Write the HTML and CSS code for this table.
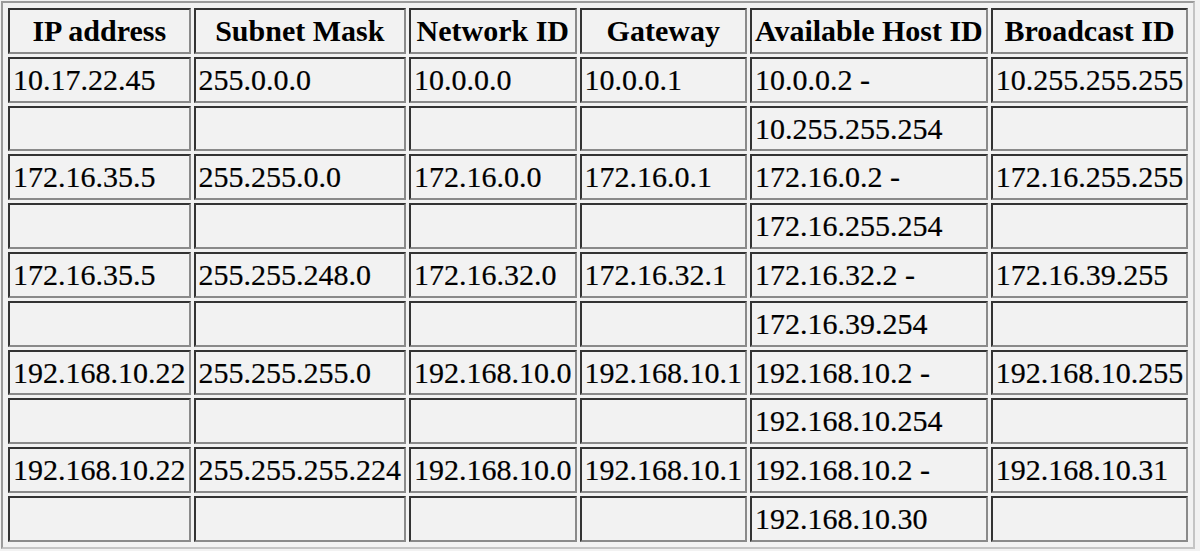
FILE: index.html
```html
<!DOCTYPE html>
<html>
<head>
<meta charset="utf-8">
<title>Subnetting table</title>
<link rel="stylesheet" href="styles.css">
</head>
<body>
<table class="net-table">
  <thead>
    <tr>
      <th>IP address</th>
      <th>Subnet Mask</th>
      <th>Network ID</th>
      <th>Gateway</th>
      <th>Available Host ID</th>
      <th>Broadcast ID</th>
    </tr>
  </thead>
  <tbody>
    <tr><td>10.17.22.45</td><td>255.0.0.0</td><td>10.0.0.0</td><td>10.0.0.1</td><td>10.0.0.2 -</td><td>10.255.255.255</td></tr>
    <tr><td></td><td></td><td></td><td></td><td>10.255.255.254</td><td></td></tr>
    <tr><td>172.16.35.5</td><td>255.255.0.0</td><td>172.16.0.0</td><td>172.16.0.1</td><td>172.16.0.2 -</td><td>172.16.255.255</td></tr>
    <tr><td></td><td></td><td></td><td></td><td>172.16.255.254</td><td></td></tr>
    <tr><td>172.16.35.5</td><td>255.255.248.0</td><td>172.16.32.0</td><td>172.16.32.1</td><td>172.16.32.2 -</td><td>172.16.39.255</td></tr>
    <tr><td></td><td></td><td></td><td></td><td>172.16.39.254</td><td></td></tr>
    <tr><td>192.168.10.22</td><td>255.255.255.0</td><td>192.168.10.0</td><td>192.168.10.1</td><td>192.168.10.2 -</td><td>192.168.10.255</td></tr>
    <tr><td></td><td></td><td></td><td></td><td>192.168.10.254</td><td></td></tr>
    <tr><td>192.168.10.22</td><td>255.255.255.224</td><td>192.168.10.0</td><td>192.168.10.1</td><td>192.168.10.2 -</td><td>192.168.10.31</td></tr>
    <tr><td></td><td></td><td></td><td></td><td>192.168.10.30</td><td></td></tr>
  </tbody>
</table>
</body>
</html>
```
FILE: styles.css
```css
html, body {
  margin: 0;
  padding: 0;
  background: #f2f2f2;
}

body {
  font-family: "Liberation Serif", "Times New Roman", serif;
  color: #000;
}

.net-table {
  margin: 1px 0 0 1px;
  border-collapse: separate;
  border-spacing: 3px;
  padding: 2px;
  border-style: solid;
  border-width: 2px;
  border-color: #9a9a9a #c4c4c4 #c4c4c4 #9a9a9a;
  font-size: 30px;
  line-height: 35.8px;
}

.net-table th,
.net-table td {
  padding: 3px;
  border-style: solid;
  border-width: 2px;
  border-color: #333333 #8a8a8a #8a8a8a #333333;
  white-space: nowrap;
  vertical-align: middle;
}

.net-table th {
  font-weight: bold;
  text-align: center;
}

.net-table td {
  font-weight: normal;
  text-align: left;
  -webkit-text-stroke: 0.2px #000;
}
```
